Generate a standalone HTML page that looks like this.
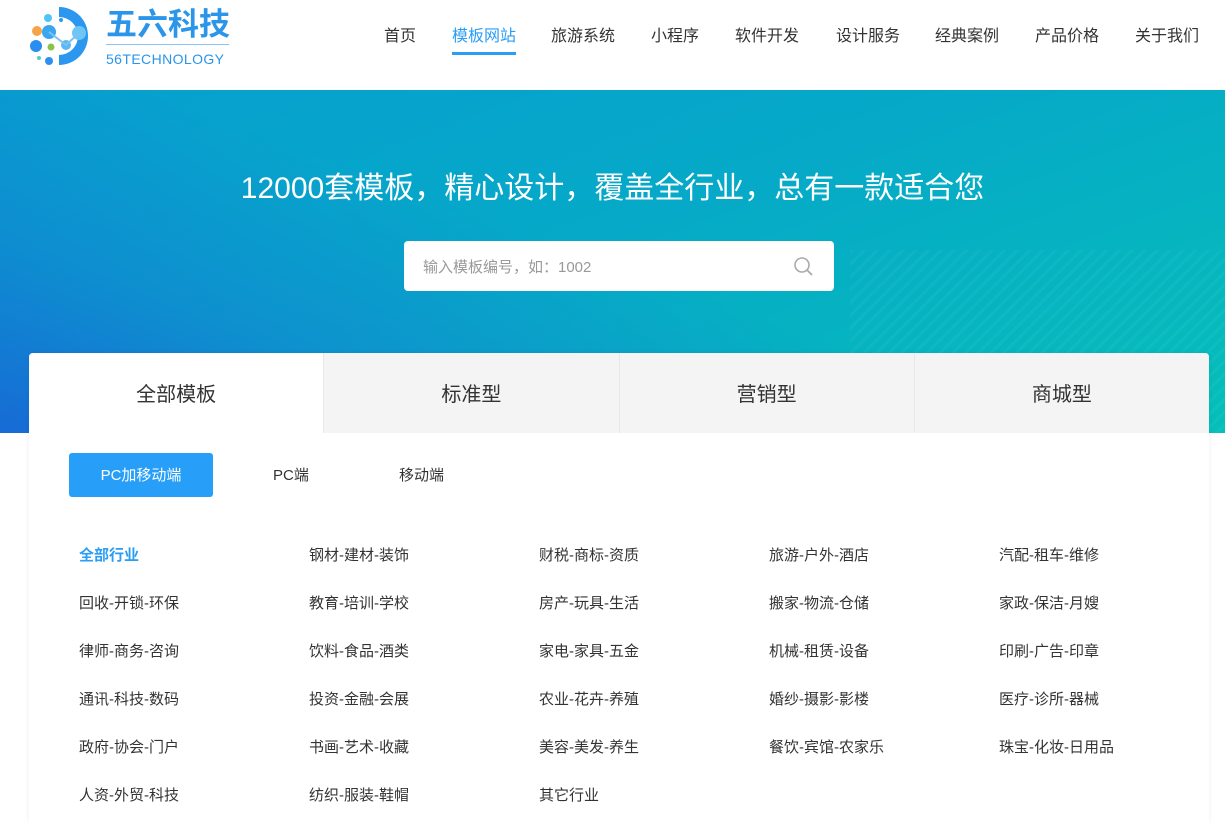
<!DOCTYPE html>
<html><head><meta charset="utf-8"><style>
*{margin:0;padding:0;box-sizing:border-box}
body{width:1225px;height:809px;overflow:hidden;background:#fff;font-family:"Liberation Sans","Noto Sans CJK SC",sans-serif;color:#333;position:relative}
.hdr{height:90px;position:relative}
.nav a{position:absolute;top:27px;font-size:16px;color:#333;text-decoration:none;white-space:nowrap;line-height:20px}
.nav a.on{color:#2a9df4}
.nav a.on:after{content:"";position:absolute;left:0;right:0;top:25px;height:3px;background:#2a9df4}
.hero{position:absolute;top:90px;left:0;width:1225px;height:343px;overflow:hidden;background:linear-gradient(160deg,#079fcf 0%,#06a9c8 45%,#05bfb9 100%)}
.hero:before{content:"";position:absolute;inset:0;background:linear-gradient(20deg,rgba(25,100,215,.9) 0%,rgba(25,110,215,.4) 25%,rgba(0,0,0,0) 50%)}
.hero .stripes{position:absolute;left:850px;top:160px;width:380px;height:190px;background:repeating-linear-gradient(135deg,rgba(255,255,255,.04) 0 3px,transparent 3px 9px)}
.title{position:absolute;top:81px;width:100%;text-align:center;color:#fff;font-size:30px;line-height:36px}
.search{position:absolute;left:404px;top:151px;width:430px;height:50px;background:#fff;border-radius:4px}
.search span{position:absolute;left:19px;top:18px;font-size:15px;color:#999;line-height:18px}
.card{position:absolute;left:29px;top:353px;width:1180px;height:470px;background:#fff;border-radius:4px 4px 0 0;box-shadow:0 0 6px rgba(0,0,0,.06);overflow:hidden}
.tabs{display:flex;height:80px}
.tabs div{flex:1;background:#f4f4f4;border-left:1px solid #e8e8e8;text-align:center;line-height:84px;font-size:20px;color:#333}
.tabs div.on{background:#fff;border-left:none}
.btn{position:absolute;left:40px;top:100px;width:144px;height:44px;background:#279ff9;color:#fff;border-radius:3px;text-align:center;line-height:46px;font-size:15px}
.sub{position:absolute;top:100px;line-height:46px;font-size:15px;color:#333}
.cat{position:absolute;font-size:15px;line-height:20px;color:#333;white-space:nowrap;margin-top:2px}
</style></head><body>
<div class="hdr">
<svg style="position:absolute;left:28px;top:5px" width="65" height="62" viewBox="0 0 65 62">
<path d="M31 2 A29 29 0 0 1 31 60 L31 50 A19 19 0 0 0 31 12Z" fill="#2c97ee"/>
<circle cx="20" cy="13" r="4" fill="#4cc6f5"/><circle cx="9" cy="26" r="5" fill="#f5a44a"/>
<circle cx="21" cy="27" r="7" fill="#3aa6f0"/><circle cx="8" cy="41" r="6" fill="#2a8ef0"/>
<circle cx="23" cy="42" r="3.5" fill="#8bc34a"/><circle cx="38" cy="40" r="5" fill="#5bb8f3"/>
<circle cx="51" cy="28" r="7" fill="#6ec6f6"/><circle cx="21" cy="56" r="4" fill="#2e8ff0"/>
<circle cx="11" cy="53" r="2" fill="#5cc"/><circle cx="33" cy="15" r="2" fill="#2d9ae8"/>
<path d="M21 27 L38 40 L51 28" stroke="#7ac3f4" stroke-width="2" fill="none"/>
</svg>
<div style="position:absolute;left:106px;top:6px;font-size:31px;font-weight:bold;color:#2b95ea;line-height:38px">五六科技</div>
<div style="position:absolute;left:106px;top:44px;width:123px;height:1px;background:#8cc3f3"></div>
<div style="position:absolute;left:106px;top:51px;font-size:14px;color:#2b95ea;letter-spacing:.4px;line-height:17px">56TECHNOLOGY</div>
<div class="nav">
<a style="left:384px">首页</a><a class="on" style="left:452px">模板网站</a><a style="left:551px">旅游系统</a><a style="left:651px">小程序</a><a style="left:735px">软件开发</a><a style="left:836px">设计服务</a><a style="left:935px">经典案例</a><a style="left:1035px">产品价格</a><a style="left:1135px">关于我们</a>
</div></div>
<div class="hero"><div class="stripes"></div>
<div class="title">12000套模板，精心设计，覆盖全行业，总有一款适合您</div>
<div class="search"><span>输入模板编号，如：1002</span>
<svg style="position:absolute;left:389px;top:15px" width="22" height="22" viewBox="0 0 22 22"><circle cx="9" cy="9" r="7" stroke="#aaa" stroke-width="1.6" fill="none"/><path d="M14 14 L19 19" stroke="#aaa" stroke-width="1.8"/></svg></div>
</div>
<div class="card">
<div class="tabs"><div class="on">全部模板</div><div>标准型</div><div>营销型</div><div>商城型</div></div>
<div class="btn">PC加移动端</div><div class="sub" style="left:244px">PC端</div><div class="sub" style="left:370px">移动端</div>
</div>
<div class="cats">
<div class="cat" style="left:79px;top:544px;color:#2a9df4;font-weight:bold">全部行业</div>
<div class="cat" style="left:309px;top:544px">钢材-建材-装饰</div><div class="cat" style="left:539px;top:544px">财税-商标-资质</div><div class="cat" style="left:769px;top:544px">旅游-户外-酒店</div><div class="cat" style="left:999px;top:544px">汽配-租车-维修</div>
<div class="cat" style="left:79px;top:592px">回收-开锁-环保</div><div class="cat" style="left:309px;top:592px">教育-培训-学校</div><div class="cat" style="left:539px;top:592px">房产-玩具-生活</div><div class="cat" style="left:769px;top:592px">搬家-物流-仓储</div><div class="cat" style="left:999px;top:592px">家政-保洁-月嫂</div>
<div class="cat" style="left:79px;top:640px">律师-商务-咨询</div><div class="cat" style="left:309px;top:640px">饮料-食品-酒类</div><div class="cat" style="left:539px;top:640px">家电-家具-五金</div><div class="cat" style="left:769px;top:640px">机械-租赁-设备</div><div class="cat" style="left:999px;top:640px">印刷-广告-印章</div>
<div class="cat" style="left:79px;top:688px">通讯-科技-数码</div><div class="cat" style="left:309px;top:688px">投资-金融-会展</div><div class="cat" style="left:539px;top:688px">农业-花卉-养殖</div><div class="cat" style="left:769px;top:688px">婚纱-摄影-影楼</div><div class="cat" style="left:999px;top:688px">医疗-诊所-器械</div>
<div class="cat" style="left:79px;top:736px">政府-协会-门户</div><div class="cat" style="left:309px;top:736px">书画-艺术-收藏</div><div class="cat" style="left:539px;top:736px">美容-美发-养生</div><div class="cat" style="left:769px;top:736px">餐饮-宾馆-农家乐</div><div class="cat" style="left:999px;top:736px">珠宝-化妆-日用品</div>
<div class="cat" style="left:79px;top:784px">人资-外贸-科技</div><div class="cat" style="left:309px;top:784px">纺织-服装-鞋帽</div><div class="cat" style="left:539px;top:784px">其它行业</div>
</div>
</body></html>
